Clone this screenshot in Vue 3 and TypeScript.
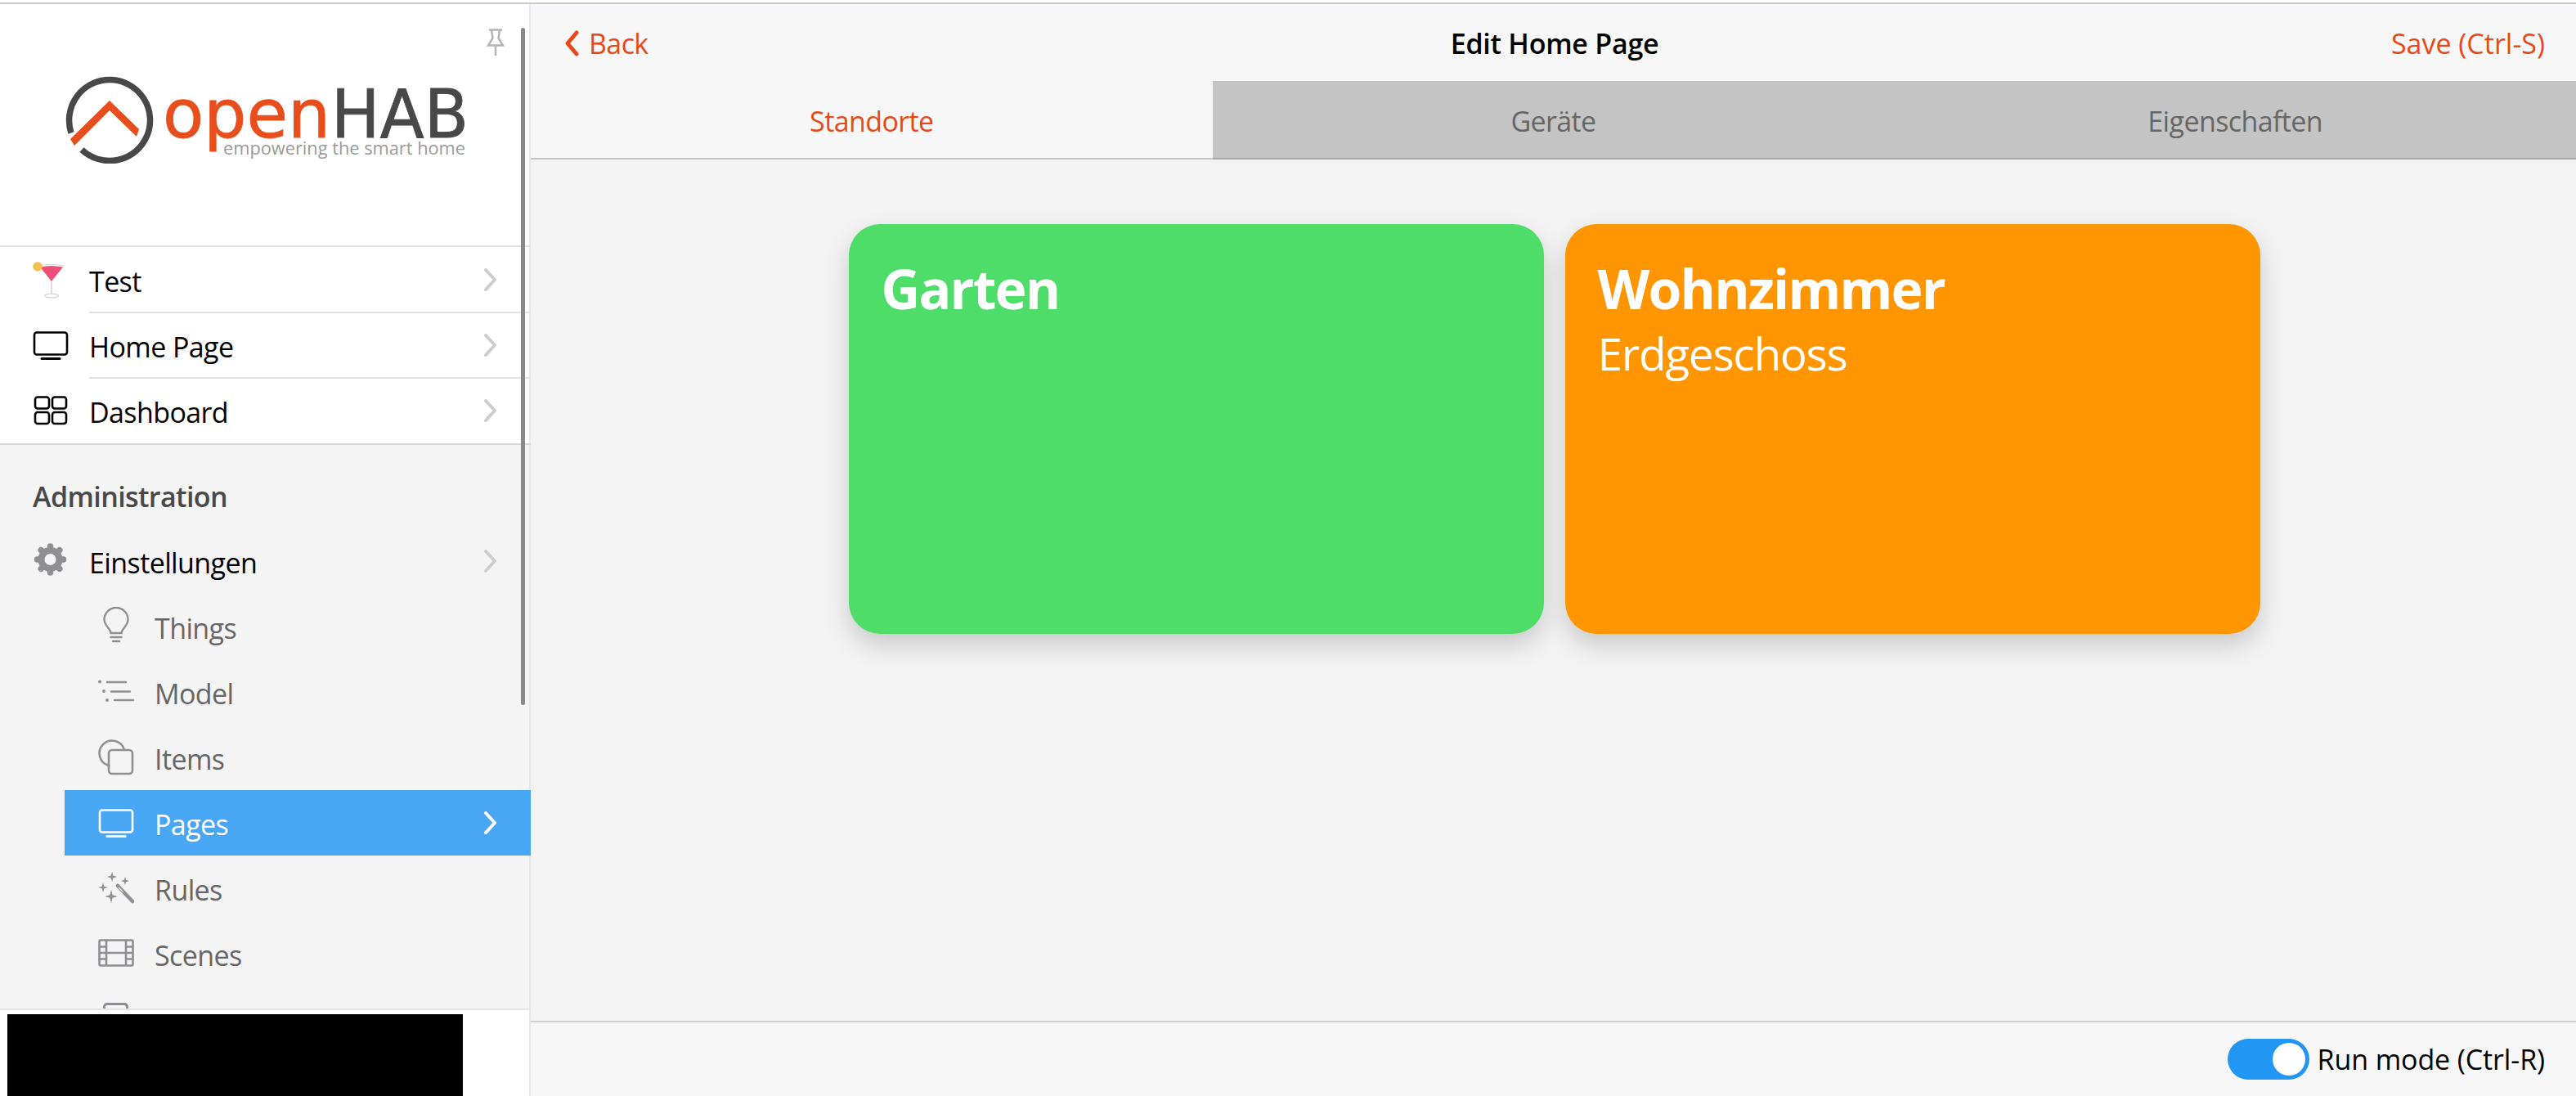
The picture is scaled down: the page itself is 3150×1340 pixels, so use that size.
<script setup lang="ts">
interface NavItem {
  label: string
  icon: string
  active?: boolean
  chevron?: boolean
}

const tv = `<g transform="translate(0 5)"><rect x="2" y="1.500" width="40" height="27" rx="3" fill="none" stroke="currentColor" stroke-width="2.600"/><path d="M11 33.500h22" stroke="currentColor" stroke-width="3" stroke-linecap="round"/></g>`

const topItems: NavItem[] = [
  {
    label: 'Test',
    chevron: true,
    icon: `<path d="M8 5 Q23 1.500 38 5" fill="none" stroke="#d8d8d8" stroke-width="1.200"/><path d="M9 6.500 Q23 3.500 37 6.500 L23 24 Z" fill="#ec5277"/><circle cx="6" cy="6" r="5.800" fill="#f6c04e"/><path d="M23 24V40" stroke="#d8d8d8" stroke-width="1.600"/><ellipse cx="23" cy="41.500" rx="8.400" ry="2.400" fill="none" stroke="#d8d8d8" stroke-width="1.400"/>`
  },
  { label: 'Home Page', chevron: true, icon: tv },
  {
    label: 'Dashboard',
    chevron: true,
    icon: `<g transform="translate(0 4)" fill="none" stroke="currentColor" stroke-width="2.600"><rect x="3" y="1.500" width="17" height="14" rx="3"/><rect x="24" y="1.500" width="17" height="14" rx="3"/><rect x="3" y="20" width="17" height="14" rx="3"/><rect x="24" y="20" width="17" height="14" rx="3"/></g>`
  }
]

const subItems: NavItem[] = [
  {
    label: 'Things',
    icon: `<g fill="none" stroke="currentColor" stroke-width="2.400" stroke-linecap="round"><path d="M15.500 30c0-5-8-9-8-16.500a14.500 14.500 0 0 1 29 0c0 7.500-8 11.500-8 16.500Z" /><path d="M15.500 35h13M18 40h8"/></g>`
  },
  {
    label: 'Model',
    icon: `<g stroke="currentColor" stroke-width="2.400" stroke-linecap="round"><path d="M11 10h23M16 21.500h23M20 32h23" /></g><circle cx="2" cy="9.500" r="2" fill="currentColor"/><circle cx="7" cy="21" r="2" fill="currentColor"/><circle cx="11" cy="32" r="2" fill="currentColor"/>`
  },
  {
    label: 'Items',
    icon: `<g fill="none" stroke="currentColor" stroke-width="2.600"><path d="M14 33a15 15 0 0 1-1-1A15.500 15.500 0 1 1 32 13"/><rect x="13" y="13" width="29" height="29" rx="4"/></g>`
  },
  { label: 'Pages', icon: tv, active: true, chevron: true },
  {
    label: 'Rules',
    icon: `<g transform="translate(0 2)"><path d="M17 0l1.400 4.600L23 6l-4.600 1.400L17 12l-1.400-4.600L11 6l4.600-1.400Z M33 6l1.200 3.800L38 11l-3.800 1.200L33 16l-1.200-3.800L28 11l3.800-1.200Z M6 13l1.300 4.700L12 19l-4.700 1.300L6 25l-1.300-4.700L0 19l4.700-1.300Z M16 22l1.700 6.300L24 30l-6.300 1.700L16 38l-1.700-6.300L8 30l6.300-1.700Z" fill="currentColor"/><path d="M24 17l18 19" stroke="currentColor" stroke-width="4.500" stroke-linecap="round"/><path d="M25 19l6 6" stroke="#f4f4f4" stroke-width="1.200"/></g>`
  },
  {
    label: 'Scenes',
    icon: `<g transform="translate(0 3.500)" fill="none" stroke="currentColor" stroke-width="2.600"><rect x="1.500" y="2" width="41" height="31" rx="1.500"/><path d="M10 2v31M34 2v31M10 17.500h24M1.500 10h8.500M1.500 17.500h8.500M1.500 25h8.500M34 10h8.500M34 17.500h8.500M34 25h8.500"/></g>`
  }
]

const gearTeeth = [0, 45, 90, 135, 180, 225, 270, 315]

const tabs = ['Standorte', 'Geräte', 'Eigenschaften']

const cards = [
  { title: 'Garten', subtitle: '', color: '#4edd68' },
  { title: 'Wohnzimmer', subtitle: 'Erdgeschoss', color: '#ff9500' }
]
</script>

<template>
  <div class="app">
    <div class="topline"></div>
    <div class="shell">
      <aside class="sidebar">
        <div class="sidebar-scroll">
          <header class="brand">
            <svg class="logo" width="500" height="110" viewBox="0 0 500 110">
              <path d="M7 72.500A49.500 49.500 0 1 1 20 93" fill="none" stroke="#484848" stroke-width="7.500" />
              <path d="M54 33 90 68 87 77 54 45 11 88 6 80Z" fill="#e84e1b" />
              <text x="119" y="78" class="logo-open" textLength="205" lengthAdjust="spacingAndGlyphs">open</text>
              <text x="325" y="78" class="logo-hab" textLength="168" lengthAdjust="spacingAndGlyphs">HAB</text>
              <text x="193" y="99" class="logo-tag" textLength="296" lengthAdjust="spacingAndGlyphs">empowering the smart home</text>
            </svg>
          </header>
          <ul class="list top-list">
            <li v-for="item in topItems" :key="item.label" class="row">
              <svg class="icon" width="44" height="44" viewBox="0 0 44 44" v-html="item.icon"></svg>
              <span class="row-label">{{ item.label }}</span>
              <svg class="chev" width="16" height="28" viewBox="0 0 16 28"><path d="M2 2l11 12L2 26" fill="none" stroke="currentColor" stroke-width="4" stroke-linecap="round" stroke-linejoin="round" /></svg>
            </li>
          </ul>
          <section class="admin">
            <h2 class="admin-title">Administration</h2>
            <div class="row admin-row">
              <svg class="icon gear" width="44" height="40" viewBox="0 0 44 40">
                <g transform="translate(21.500 18)" fill="none" stroke="currentColor">
                  <circle r="11" stroke-width="8" />
                  <path v-for="deg in gearTeeth" :key="deg" :transform="`rotate(${deg})`" d="M0-13V-16" stroke-width="7.500" stroke-linecap="round" />
                </g>
              </svg>
              <span class="row-label">Einstellungen</span>
              <svg class="chev" width="16" height="28" viewBox="0 0 16 28"><path d="M2 2l11 12L2 26" fill="none" stroke="currentColor" stroke-width="4" stroke-linecap="round" stroke-linejoin="round" /></svg>
            </div>
            <ul class="list sub-list">
              <li v-for="item in subItems" :key="item.label" class="row sub-row" :class="{ active: item.active }">
                <svg class="icon" width="44" height="44" viewBox="0 0 44 44" v-html="item.icon"></svg>
                <span class="row-label">{{ item.label }}</span>
                <svg v-if="item.chevron" class="chev" width="16" height="28" viewBox="0 0 16 28"><path d="M2 2l11 12L2 26" fill="none" stroke="currentColor" stroke-width="4" stroke-linecap="round" stroke-linejoin="round" /></svg>
              </li>
            </ul>
            <div class="peek"></div>
          </section>
        </div>
        <svg class="pin" width="22" height="34" viewBox="0 0 22 34"><path d="M3 1.500h16M6 1.500l1.500 10L2 20.500h18l-5.500-9 1.500-10M11 20.500V33" fill="none" stroke="#b4b4b8" stroke-width="2.500" /></svg>
        <div class="scrollbar"></div>
        <footer class="side-footer"><div class="redacted"></div></footer>
      </aside>

      <main class="main">
        <nav class="navbar">
          <a class="nav-link back">
            <svg width="20" height="32" viewBox="0 0 20 32"><path d="M16 3 5 16l11 13" fill="none" stroke="currentColor" stroke-width="5" stroke-linecap="round" stroke-linejoin="round" /></svg>
            <span>Back</span>
          </a>
          <div class="nav-title">Edit Home Page</div>
          <a class="nav-link save">Save (Ctrl-S)</a>
        </nav>
        <div class="tabs">
          <div v-for="(tab, i) in tabs" :key="tab" class="tab" :class="{ current: i === 0 }"><span class="tab-text">{{ tab }}</span></div>
        </div>
        <div class="content">
          <article v-for="card in cards" :key="card.title" class="card" :style="{ background: card.color }">
            <div class="card-title">{{ card.title }}</div>
            <div v-if="card.subtitle" class="card-sub">{{ card.subtitle }}</div>
          </article>
        </div>
        <div class="toolbar">
          <div class="toggle"><span class="knob"></span></div>
          <span class="toolbar-label">Run mode (Ctrl-R)</span>
        </div>
      </main>
    </div>
  </div>
</template>

<style>
html, body { margin: 0; padding: 0; background: #fff; }
</style>

<style scoped>
.app {
  width: 3150px;
  height: 1340px;
  display: flex;
  flex-direction: column;
  overflow: hidden;
  background: #fff;
  font-family: "Open Sans", "Noto Sans", sans-serif;
  font-size: 34px;
  letter-spacing: -0.6px;
  color: #000;
}
.topline { height: 3px; border-bottom: 2px solid #c9c9d1; flex: none; }
.shell { flex: 1; display: flex; min-height: 0; }

.sidebar {
  position: relative;
  width: 649px;
  flex: none;
  display: flex;
  flex-direction: column;
  background: #f4f4f4;
  overflow: hidden;
}
.sidebar-scroll { flex: 1; min-height: 0; overflow: hidden; }
.brand {
  height: 295px;
  box-sizing: border-box;
  background: #fff;
  box-shadow: inset -2px 0 0 #e8e8e8;
  padding: 85px 0 0 80px;
}
.logo { display: block; }
.logo-open { font: 82px "DejaVu Sans", sans-serif; fill: #e84e1b; stroke: #e84e1b; stroke-width: 0.8px; letter-spacing: 0; }
.logo-hab { font: 82px "DejaVu Sans", sans-serif; fill: #484848; stroke: #484848; stroke-width: 0.8px; letter-spacing: 0; }
.logo-tag { font: 21.500px "Open Sans", sans-serif; fill: #9a9a9a; letter-spacing: 0; }

.list { list-style: none; margin: 0; padding: 0; }
.top-list {
  background: #fff;
  border-top: 2px solid #e2e2e2;
  border-bottom: 2px solid #d6d6d6;
  box-shadow: inset -2px 0 0 #e8e8e8;
}
.row {
  height: 80px;
  box-sizing: border-box;
  display: flex;
  align-items: center;
  padding: 0 41px 0 40px;
  position: relative;
}
.top-list .row + .row::before {
  content: "";
  position: absolute;
  left: 109px;
  right: 0;
  top: -1px;
  height: 2px;
  background: #e2e2e2;
}
.icon { flex: none; margin-right: 25px; color: #000; overflow: visible; }
.row-label { flex: 1; position: relative; top: 2px; }
.chev { flex: none; color: #cdcdcd; }

.admin { background: #f4f4f4; box-shadow: inset -2px 0 0 #e8e8e8; }
.admin-title {
  margin: 0;
  height: 102px;
  box-sizing: border-box;
  padding: 38px 0 0 40px;
  font-size: 34px;
  font-weight: 600;
  line-height: 50px;
  color: #484848;
}
.row .gear { color: #8e8e93; }
.sub-list { margin-left: 79px; }
.sub-row { color: #666; padding-left: 41px; }
.sub-row .icon { color: #8e8e93; }
.sub-row.active { background: #47a7f5; color: #fff; }
.sub-row.active .icon, .sub-row.active .chev { color: #fff; }
.peek {
  width: 31px;
  height: 20px;
  margin: 20px 0 0 126px;
  box-sizing: border-box;
  border: 3px solid #8e8e93;
  border-bottom: 0;
  border-radius: 5px 5px 0 0;
}

.pin { position: absolute; left: 595px; top: 30px; }
.scrollbar {
  position: absolute;
  left: 637px;
  top: 29px;
  width: 5px;
  height: 828px;
  border-radius: 3px;
  background: #888;
}
.side-footer {
  height: 107px;
  flex: none;
  box-sizing: border-box;
  background: #fff;
  border-top: 2px solid #e4e4e4;
  box-shadow: inset -2px 0 0 #e8e8e8;
  padding: 5px 83px 0 9px;
}
.redacted { height: 100px; background: #000; }

.main { flex: 1; min-width: 0; display: flex; flex-direction: column; background: #f3f3f3; }
.navbar {
  height: 94px;
  flex: none;
  background: #f7f7f7;
  display: flex;
  align-items: center;
  justify-content: space-between;
  padding: 2px 38px 0 40px;
  box-sizing: border-box;
  position: relative;
}
.nav-link { color: #e64a19; display: flex; align-items: center; gap: 11px; }
.save { letter-spacing: 0; }
.nav-title {
  position: absolute;
  left: 3px;
  right: 0;
  text-align: center;
  font-weight: 600;
  letter-spacing: -0.25px;
}
.tabs {
  height: 96px;
  flex: none;
  display: flex;
  border-bottom: 2px solid #a8a8a8;
  box-sizing: border-box;
}
.tab {
  flex: 1;
  display: flex;
  align-items: center;
  justify-content: center;
  background: #c4c4c4;
  color: #666;
}
.tab-text { position: relative; top: 2px; }
.tab.current { background: #f7f7f7; color: #e64a19; box-shadow: 0 2px 0 #c4c4c4; }

.content {
  flex: 1;
  min-height: 0;
  display: flex;
  justify-content: center;
  align-items: flex-start;
  gap: 26px;
  padding: 79px 0 0 2px;
}
.card {
  width: 850px;
  height: 501px;
  box-sizing: border-box;
  padding: 38px 40px;
  border-radius: 38px;
  color: #fff;
  box-shadow: 0 14px 30px rgba(0, 0, 0, 0.17);
}
.card-title { font-size: 66px; font-weight: 700; line-height: 80px; letter-spacing: -1.800px; }
.card-sub { font-size: 55px; line-height: 80px; letter-spacing: -1.300px; }

.toolbar {
  height: 92px;
  flex: none;
  box-sizing: border-box;
  border-top: 2px solid #cfcfcf;
  background: #f7f7f7;
  display: flex;
  align-items: center;
  justify-content: flex-end;
  padding-right: 38px;
  gap: 10px;
}
.toolbar-label { letter-spacing: -0.1px; }
.toggle {
  width: 100px;
  height: 50px;
  border-radius: 25px;
  background: #2196f3;
  position: relative;
}
.knob {
  position: absolute;
  right: 5px;
  top: 5px;
  width: 40px;
  height: 40px;
  border-radius: 50%;
  background: #fff;
}
</style>
